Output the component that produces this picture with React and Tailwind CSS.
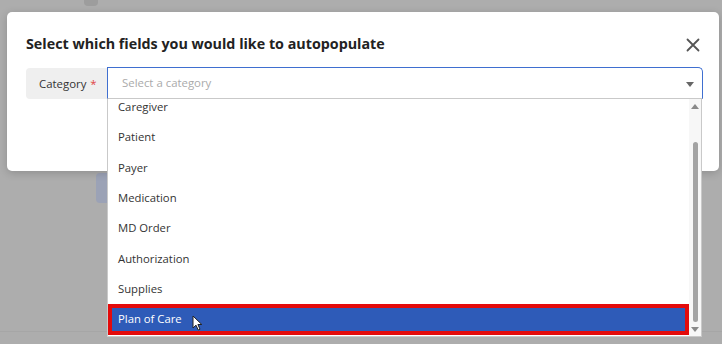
import React from "react";

const items = [
  "Caregiver",
  "Patient",
  "Payer",
  "Medication",
  "MD Order",
  "Authorization",
  "Supplies",
  "Plan of Care",
];

const Pointer = () => (
  <svg width="11" height="16" viewBox="0 0 11 16" className="absolute left-[192px] top-[315px]">
    <path
      d="M1 1 L1 13 L4 10.2 L6.2 15 L8 14.2 L5.9 9.5 L9.8 9.5 Z"
      fill="#fff"
      stroke="#222"
      strokeWidth="1"
      strokeLinejoin="round"
    />
  </svg>
);

const App = () => {
  const selected = "Plan of Care";

  return (
    <div className="relative w-[722px] h-[344px] overflow-hidden bg-[#adadad] font-['Open_Sans',sans-serif]">
      {/* dimmed page behind the modal */}
      <div className="absolute left-[84px] top-[-6px] w-[14px] h-[12px] rounded-[4px] bg-[#9d9d9d]" />
      <div className="absolute left-[96px] top-[173px] w-[60px] h-[30px] rounded-[4px] bg-[#9ba2b6]" />
      <div className="absolute left-0 top-[331px] w-[722px] h-px bg-[#a6a6a6]" />

      {/* modal */}
      <div className="absolute left-[7px] top-[12px] w-[712px] h-[159px] rounded-[5px] bg-white shadow-[0_2px_8px_rgba(0,0,0,0.18)]">
        <div className="flex items-center justify-between pl-[19px] pr-[19px] pt-[21px] h-[43px]">
          <h2 className="text-[14.3px] font-bold text-[#222] leading-[22px]">
            Select which fields you would like to autopopulate
          </h2>
          <svg width="14" height="14" viewBox="0 0 14 14" className="mt-[1px]">
            <path d="M1.5 1.5 L12.5 12.5 M12.5 1.5 L1.5 12.5" stroke="#555" strokeWidth="1.8" strokeLinecap="round" />
          </svg>
        </div>

        <div className="flex mt-[12px] ml-[19px]">
          <div className="flex items-center w-[81px] h-[31px] mt-[1px] pl-[13px] rounded-l-[4px] bg-[#efefef] text-[11.4px] text-[#333]">
            Category<span className="ml-[4px] text-[#e04444]">*</span>
          </div>
          <div className="relative w-[596px] h-[32px]">
            <div className="flex items-center justify-between h-full pl-[14px] pr-[8px] border border-[#3f6fd0] border-b-[#c9c9c9] rounded-tr-[5px] text-[11.4px] text-[#aaa]">
              <span>Select a category</span>
              <svg width="8" height="5" viewBox="0 0 8 5" className="mt-[2px]">
                <path d="M0 0 L8 0 L4 5 Z" fill="#666" />
              </svg>
            </div>

            {/* open dropdown */}
            <div className="absolute left-0 top-[32px] w-[595px] h-[238px] flex bg-white border-x border-b border-[#c9c9c9] overflow-hidden">
              <div className="flex-1 overflow-hidden">
                <div className="-mt-[7px]">
                  {items.map((item) => (
                    <div
                      key={item}
                      className={
                        item === selected
                          ? "flex items-center h-[31px] mt-[-0.6px] pl-[10px] text-[11.3px] bg-[#2e5bb8] text-white ring-[4px] ring-inset ring-[#e30b0b]"
                          : "flex items-center h-[30.4px] pl-[10px] text-[11.3px] text-[#333]"
                      }
                    >
                      {item}
                    </div>
                  ))}
                </div>
              </div>
              <div className="flex flex-col items-center w-[12px] h-full pt-[5px] pb-[4px] bg-[#f7f7f7]">
                <svg width="8" height="5" viewBox="0 0 8 5">
                  <path d="M0 5 L8 5 L4 0 Z" fill="#8a8a8a" />
                </svg>
                <div className="w-[5px] h-[180px] mt-[33px] rounded-full bg-[#a3a3a3]" />
                <div className="flex-1" />
                <svg width="8" height="5" viewBox="0 0 8 5">
                  <path d="M0 0 L8 0 L4 5 Z" fill="#8a8a8a" />
                </svg>
              </div>
            </div>
          </div>
        </div>
      </div>

      <Pointer />
    </div>
  );
};

export default App;
